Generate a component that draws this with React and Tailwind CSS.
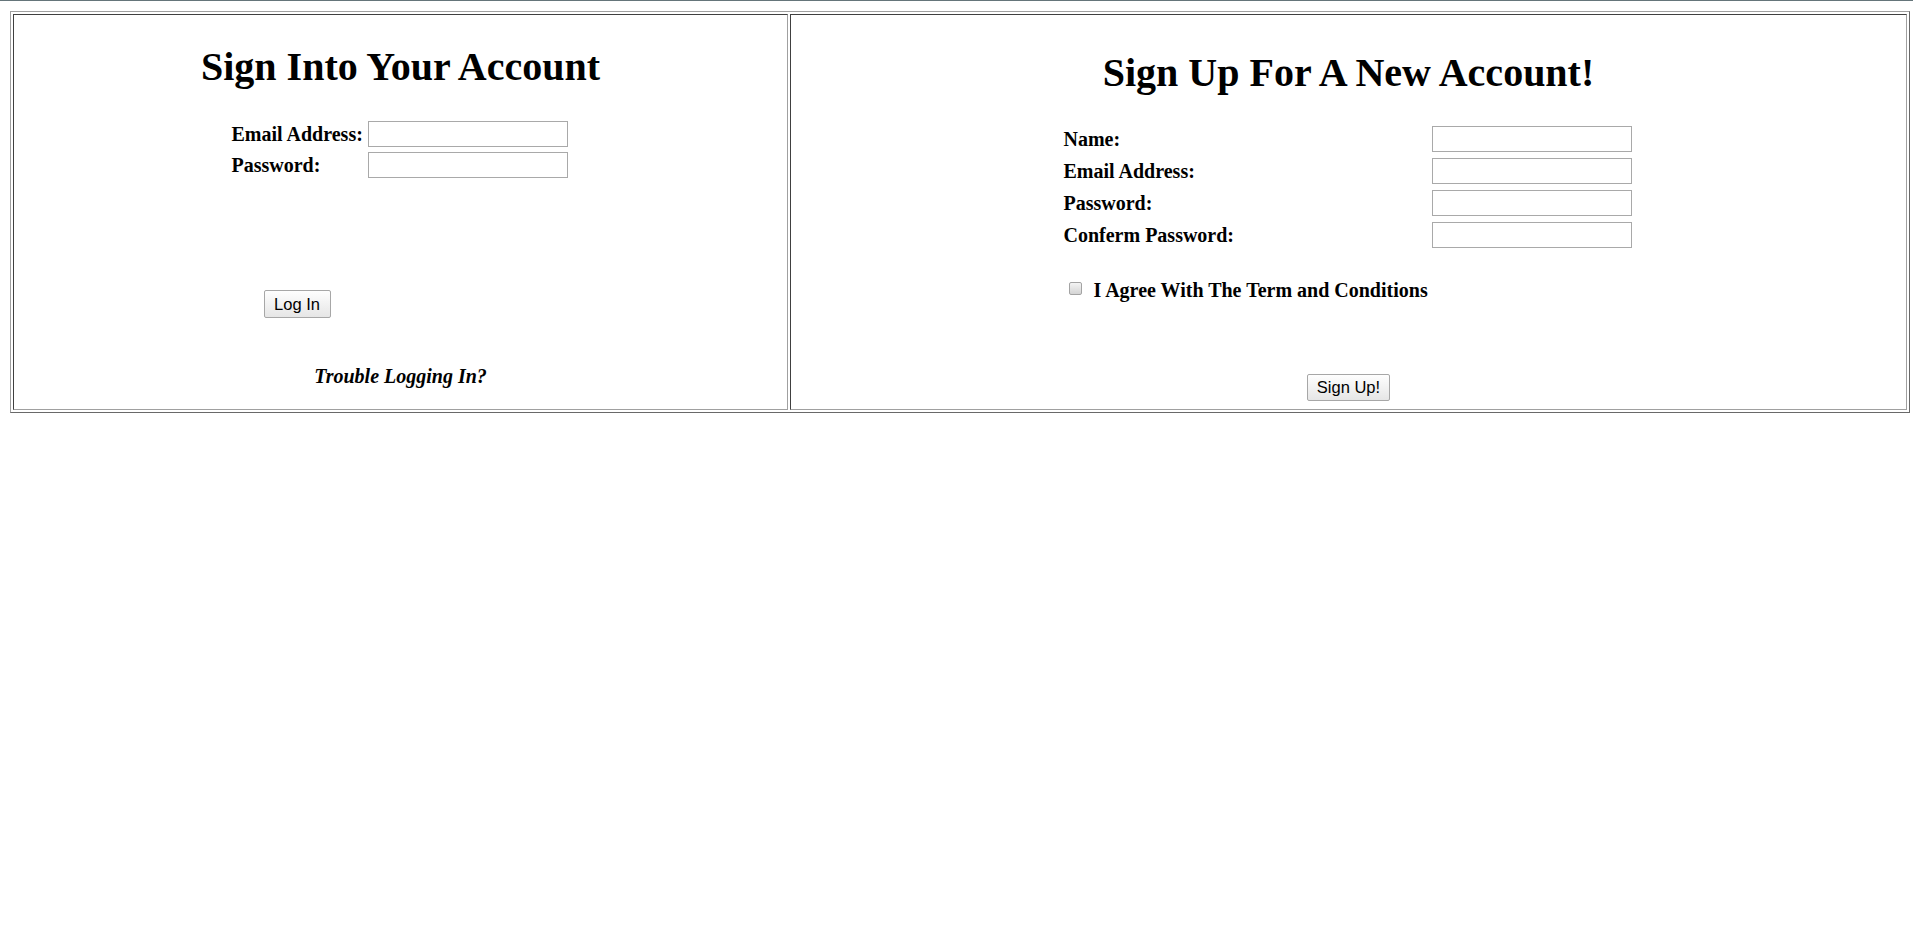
import React from 'react';

// Two old-school bordered table cells: sign in on the left, sign up on the right.

const cellBorder =
  'border border-t-[#404040] border-l-[#404040] border-r-[#a0a0a0] border-b-[#a0a0a0]';

const btn =
  "border border-[#a7a7a7] rounded-[2px] bg-linear-to-b from-[#fefefe] to-[#e6e6e6] font-['Liberation_Sans',Arial,sans-serif] text-[16.5px] leading-none text-black";

function Field({ label, labelWidth }) {
  return (
    <div className="flex h-[26px] items-center">
      <label
        className="text-[20px] font-bold leading-[26px] whitespace-nowrap"
        style={{ width: labelWidth }}
      >
        {label}
      </label>
      <input
        type="text"
        className="h-[26px] w-[200px] border border-[#a9a9a9] bg-white px-1 text-[16px] outline-none"
      />
    </div>
  );
}

function SignIn() {
  return (
    <div className={`flex h-[396px] w-[775px] flex-col items-center pt-[32px] ${cellBorder}`}>
      <h1 className="text-[40px] font-bold leading-[40px]">Sign Into Your Account</h1>

      <div className="-ml-[2px] mt-[34px] flex w-[336px] flex-col gap-[5px]">
        <Field label="Email Address:" labelWidth={136} />
        <Field label="Password:" labelWidth={136} />
      </div>

      <div className="-ml-[2px] mt-[112px] w-[336px]">
        <button type="button" className={`ml-[32px] h-[28px] w-[67px] ${btn}`}>
          Log In
        </button>
      </div>

      <p className="mt-[47px] text-[20px] font-bold italic leading-[23px]">Trouble Logging In?</p>
    </div>
  );
}

function SignUp() {
  return (
    <div className={`flex h-[396px] flex-1 flex-col items-center pt-[38px] ${cellBorder}`}>
      <h1 className="text-[40px] font-bold leading-[40px]">Sign Up For A New Account!</h1>

      <div className="-ml-[2px] mt-[33px] flex w-[568px] flex-col gap-[6px]">
        <Field label="Name:" labelWidth={368} />
        <Field label="Email Address:" labelWidth={368} />
        <Field label="Password:" labelWidth={368} />
        <Field label="Conferm Password:" labelWidth={368} />
      </div>

      <div className="-ml-[2px] mt-[31px] flex w-[568px] items-start pl-[5px]">
        <input
          type="checkbox"
          className="mt-[3px] h-[13px] w-[13px] appearance-none rounded-[2px] border border-[#a3a3a3] bg-linear-to-b from-[#f4f4f4] to-[#d4d4d4]"
        />
        <span className="ml-[12px] text-[20px] font-bold leading-[23px]">
          I Agree With The Term and Conditions
        </span>
      </div>

      <button type="button" className={`mt-[72px] h-[27px] w-[83px] ${btn}`}>
        Sign Up!
      </button>
    </div>
  );
}

export default function App() {
  return (
    <div className="min-h-screen bg-white font-['Liberation_Serif','Times_New_Roman',serif] text-black">
      <div className="h-px bg-[#65757a]" />
      <div className="pl-[10px] pt-[10px]">
        <div className="flex w-[1900px] gap-[2px] border border-t-[#a0a0a0] border-l-[#a0a0a0] border-r-[#696969] border-b-[#696969] p-[2px]">
          <SignIn />
          <SignUp />
        </div>
      </div>
    </div>
  );
}
